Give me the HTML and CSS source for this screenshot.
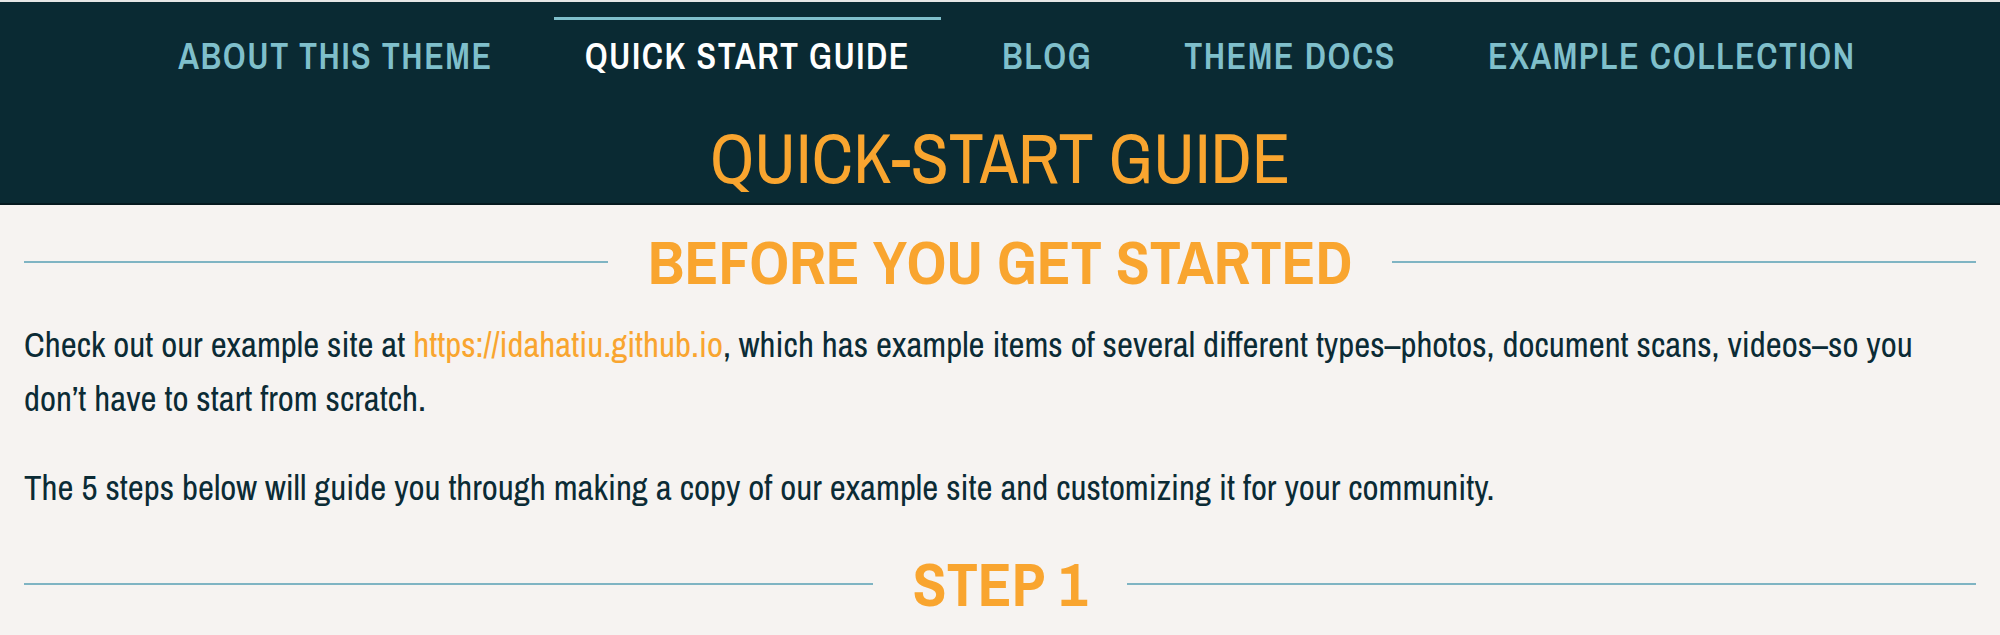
FILE: index.html
```html
<!DOCTYPE html>
<html lang="en">
<head>
<meta charset="utf-8">
<title>Quick-Start Guide</title>
<link rel="stylesheet" href="styles.css">
</head>
<body>
<div class="top-strip"></div>
<header class="site-header">
  <nav class="main-nav">
    <a class="nav-item" href="#">ABOUT THIS THEME</a>
    <a class="nav-item nav-item--active" href="#">QUICK START GUIDE</a>
    <a class="nav-item" href="#">BLOG</a>
    <a class="nav-item" href="#">THEME DOCS</a>
    <a class="nav-item" href="#">EXAMPLE COLLECTION</a>
  </nav>
  <h1 class="page-title">QUICK-START GUIDE</h1>
</header>
<main class="content">
  <h2 class="section-heading"><span class="section-heading__text">BEFORE YOU GET STARTED</span></h2>
  <p class="para">Check out our example site at <a class="link" href="#">https://idahatiu.github.io</a>, which has example items of several different types–photos, document scans, videos–so you don’t have to start from scratch.</p>
  <p class="para">The 5 steps below will guide you through making a copy of our example site and customizing it for your community.</p>
  <h2 class="section-heading section-heading--step"><span class="section-heading__text">STEP 1</span></h2>
</main>
</body>
</html>
```
FILE: styles.css
```css
* { box-sizing: border-box; }
html, body { margin: 0; padding: 0; }
body {
  background: #f6f3f1;
  color: #0b2b35;
  font-family: "Archivo Narrow", "Roboto Condensed", "Liberation Sans", sans-serif;
  overflow: hidden;
}
.top-strip {
  height: 2px;
  background: #e6e6e6;
}
.site-header {
  background: #0a2a33;
  border-bottom: 2px solid #05191f;
  padding-top: 15px;
  height: 203px;
}
.main-nav {
  display: flex;
  justify-content: center;
  gap: 30px;
  padding-left: 34px;
}
.nav-item {
  display: block;
  padding: 14px 31px 0;
  border-top: 3px solid transparent;
  font-size: 36px;
  line-height: 44px;
  font-weight: 600;
  letter-spacing: 1.5px;
  color: #7fbfcb;
  text-decoration: none;
}
.nav-item--active {
  color: #ffffff;
  border-top-color: #7fbfcb;
}
.page-title {
  margin: 45px 0 0;
  text-align: center;
  font-size: 70px;
  line-height: 70px;
  font-weight: 400;
  color: #f9a52f;
}
.content {
  padding: 0 24px;
}
.section-heading {
  display: flex;
  align-items: center;
  gap: 40px;
  margin: 0;
  padding-top: 21px;
  font-size: 62px;
  line-height: 72px;
  font-weight: 700;
  color: #f9a52f;
}
.section-heading::before,
.section-heading::after {
  content: "";
  flex: 1;
  height: 2px;
  background: #7fb4c3;
}
.section-heading--step {
  padding-top: 33px;
}
.para {
  margin: 20px 0 0;
  font-size: 35px;
  line-height: 54px;
}
.para + .para {
  margin-top: 35px;
}
.link {
  color: #f9a52f;
  text-decoration: none;
}
```
